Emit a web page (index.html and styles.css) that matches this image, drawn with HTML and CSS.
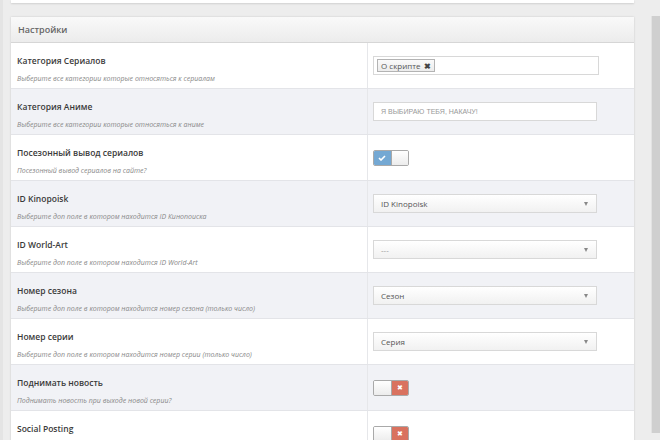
FILE: index.html
```html
<!DOCTYPE html>
<html lang="ru">
<head>
<meta charset="utf-8">
<link rel="stylesheet" href="styles.css">
</head>
<body>
<div class="page">
  <div class="main">
    <div class="topcard"></div>
    <div class="panel">
      <div class="panel-head">Настройки</div>

      <div class="row">
        <div class="info"><div class="label">Категория Сериалов</div><div class="desc">Выберите все категории которые относяться к сериалам</div></div>
        <div class="ctrl"><div class="taginput"><span class="tag">О скрипте <b>✖</b></span></div></div>
      </div>

      <div class="row alt">
        <div class="info"><div class="label">Категория Аниме</div><div class="desc">Выберите все категории которые относяться к аниме</div></div>
        <div class="ctrl"><div class="textinput">Я ВЫБИРАЮ ТЕБЯ, НАКАЧУ!</div></div>
      </div>

      <div class="row">
        <div class="info"><div class="label">Посезонный вывод сериалов</div><div class="desc">Посезонный вывод сериалов на сайте?</div></div>
        <div class="ctrl"><div class="toggle on"><span class="seg yes"><svg width="8" height="6" viewBox="0 0 8 6"><path d="M1 3l2 2 4-4" fill="none" stroke="#fff" stroke-width="1.6"/></svg></span><span class="seg blank"></span></div></div>
      </div>

      <div class="row alt">
        <div class="info"><div class="label">ID Kinopoisk</div><div class="desc">Выберите доп поле в котором находится ID Кинопоиска</div></div>
        <div class="ctrl"><div class="select"><span>ID Kinopoisk</span><i class="arrow"></i></div></div>
      </div>

      <div class="row">
        <div class="info"><div class="label">ID World-Art</div><div class="desc">Выберите доп поле в котором находится ID World-Art</div></div>
        <div class="ctrl"><div class="select"><span class="muted">---</span><i class="arrow"></i></div></div>
      </div>

      <div class="row alt">
        <div class="info"><div class="label">Номер сезона</div><div class="desc">Выберите доп поле в котором находится номер сезона (только число)</div></div>
        <div class="ctrl"><div class="select"><span>Сезон</span><i class="arrow"></i></div></div>
      </div>

      <div class="row">
        <div class="info"><div class="label">Номер серии</div><div class="desc">Выберите доп поле в котором находится номер серии (только число)</div></div>
        <div class="ctrl"><div class="select"><span>Серия</span><i class="arrow"></i></div></div>
      </div>

      <div class="row alt">
        <div class="info"><div class="label">Поднимать новость</div><div class="desc">Поднимать новость при выходе новой серии?</div></div>
        <div class="ctrl"><div class="toggle off"><span class="seg blank"></span><span class="seg no">✖</span></div></div>
      </div>

      <div class="row">
        <div class="info"><div class="label">Social Posting</div><div class="desc">&nbsp;</div></div>
        <div class="ctrl"><div class="toggle off"><span class="seg blank"></span><span class="seg no">✖</span></div></div>
      </div>
    </div>
  </div>
  <div class="side"></div>
</div>
</body>
</html>
```

FILE: styles.css
```css
html, body {
  margin: 0;
  padding: 0;
  height: 100%;
  overflow: hidden;
}
body {
  background: #ededed;
  font-family: "Open Sans", "Liberation Sans", sans-serif;
}
.page {
  display: flex;
  align-items: flex-start;
  gap: 17px;
  height: 440px;
  box-sizing: border-box;
  border-left: 3px solid #e4e4e4;
  padding-left: 8px;
}
.main {
  width: 623px;
  flex: none;
}
.topcard {
  height: 3px;
  background: #fff;
  box-shadow: 0 1px 2px rgba(0,0,0,0.12);
}
.panel {
  margin-top: 14px;
  background: #fff;
  box-shadow: 0 0 2px rgba(0,0,0,0.15);
}
.panel-head {
  height: 25px;
  line-height: 25px;
  padding-left: 7px;
  font-size: 9px;
  font-weight: 600;
  color: #666;
  background: linear-gradient(#f9f9f9, #ececec);
  border-bottom: 1px solid #d6d6d6;
}
.row {
  display: flex;
  height: 45px;
  border-bottom: 1px solid #e3e4e8;
  background: #fff;
}
.row.alt {
  background: #f1f2f6;
}
.info {
  width: 350px;
  flex: none;
  padding: 12px 0 0 6px;
  border-right: 1px solid #e6e7ea;
}
.label {
  font-size: 8.5px;
  font-weight: 600;
  color: #3a3a3a;
  line-height: 12px;
}
.desc {
  margin-top: 6px;
  font-size: 7px;
  font-style: italic;
  color: #888;
  line-height: 12px;
}
.ctrl {
  display: flex;
  align-items: center;
  padding-left: 5px;
}
.taginput, .textinput, .select {
  height: 17px;
  border: 1px solid #d8d8d8;
  background: #fff;
  display: flex;
  align-items: center;
}
.taginput {
  padding: 0 3px;
  width: 218px;
}
.tag {
  font-size: 8px;
  color: #555;
  border: 1px solid #b3b3b3;
  background: linear-gradient(#fafafa, #ececec);
  padding: 0 3px;
  height: 11px;
  line-height: 11px;
}
.tag b {
  font-size: 8px;
  color: #444;
  margin-left: 1px;
}
.textinput {
  padding-left: 7px;
  width: 215px;
  font-family: "Liberation Sans", sans-serif;
  font-size: 7px;
  color: #999;
}
.select {
  justify-content: space-between;
  padding: 0 8px 0 7px;
  width: 207px;
  background: linear-gradient(#ffffff, #f1f1f1);
  font-size: 8px;
  color: #555;
}
.muted { color: #999; }
.arrow {
  width: 0;
  height: 0;
  border-left: 2.5px solid transparent;
  border-right: 2.5px solid transparent;
  border-top: 4px solid #888;
}
.toggle {
  display: flex;
  width: 34px;
  height: 14px;
  border: 1px solid #a9a9a9;
  border-radius: 2px;
  overflow: hidden;
}
.seg {
  width: 17px;
  display: flex;
  align-items: center;
  justify-content: center;
}
.seg.blank {
  background: linear-gradient(#ffffff, #ececec);
}
.seg.yes {
  background: #74a8d3;
  border-right: 1px solid #a9a9a9;
}
.seg.no {
  background: #d9725f;
  color: #fff;
  font-size: 7px;
  border-left: 1px solid #a9a9a9;
}
.side {
  width: 9px;
  flex: none;
  margin-top: 16px;
  height: 417px;
  background: #cfcfcf;
  border-left: 1px solid #e2e2e2;
}
```
